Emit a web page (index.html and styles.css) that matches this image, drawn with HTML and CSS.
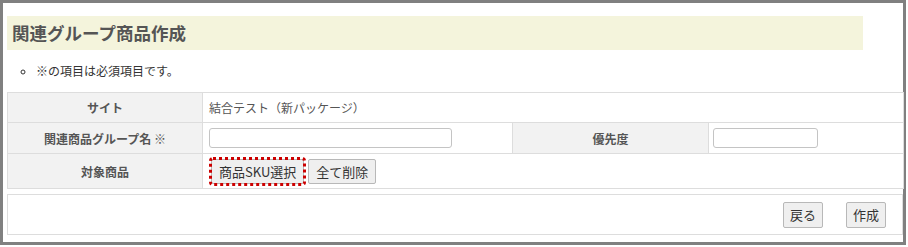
FILE: index.html
```html
<!DOCTYPE html>

<html lang="ja">
    <head>
        <title>関連グループ商品作成</title>

        <link rel="stylesheet" href="styles.css">

    </head>

    <body>
        <div class="frame">
            <h1 class="page-title">関連グループ商品作成</h1>

            <ul class="notice">
                <li>※の項目は必須項目です。</li>
            </ul>

            <table class="form-table">
                <colgroup>
                    <col class="col-label">
                    <col class="col-value">
                    <col class="col-label2">
                    <col class="col-value2">
                </colgroup>
                <tr class="row-site">
                    <th>サイト</th>
                    <td colspan="3">結合テスト（新パッケージ）</td>
                </tr>
                <tr class="row-name">
                    <th>関連商品グループ名 ※</th>
                    <td><input type="text" class="input-name"></td>
                    <th>優先度</th>
                    <td><input type="text" class="input-priority"></td>
                </tr>
                <tr class="row-target">
                    <th>対象商品</th>
                    <td colspan="3">
                        <div class="btn-row">
                            <button class="btn btn-focus">商品SKU選択</button>
                            <button class="btn">全て削除</button>
                        </div>
                    </td>
                </tr>
            </table>

            <div class="footer">
                <button class="btn btn-footer">戻る</button>
                <button class="btn btn-footer">作成</button>
            </div>
        </div>
    </body>
</html>
```

FILE: styles.css
```css
html, body {
    margin: 0;
    background: #ffffff;
    font-family: "Noto Sans CJK JP", "Noto Sans", sans-serif;
    color: #555555;
}

.frame {
    box-sizing: border-box;
    width: 906px;
    height: 245px;
    border: 3px solid #808080;
    padding: 13px 0 0 4px;
}

.page-title {
    box-sizing: border-box;
    width: 856px;
    height: 34px;
    margin: 0;
    padding: 0 5px;
    background: #f4f4dc;
    font-size: 17.5px;
    font-weight: bold;
    line-height: 34px;
    color: #555555;
}

.notice {
    margin: 0;
    padding: 13px 0 13px 29px;
    list-style: circle;
    font-size: 12px;
    line-height: 16px;
    color: #333333;
}

.notice li::marker {
    font-size: 10px;
}

.form-table {
    width: 896px;
    border-collapse: collapse;
    table-layout: fixed;
    font-size: 12px;
}

.col-label { width: 195px; }
.col-value { width: 310px; }
.col-label2 { width: 196px; }
.col-value2 { width: 195px; }

.form-table th,
.form-table td {
    border: 1px solid #dddddd;
    padding: 0 6px;
}

.form-table th {
    background: #f2f2f2;
    font-weight: bold;
    color: #555555;
    text-align: center;
}

.form-table td {
    color: #555555;
}

.row-site th, .row-site td { height: 29px; }
.row-name th, .row-name td { height: 30px; }
.row-target th, .row-target td { height: 34px; }

.form-table td:last-child { padding-left: 4px; }
.row-site td, .row-target td { padding-left: 6px !important; }

.form-table input {
    box-sizing: border-box;
    height: 20px;
    border: 1px solid #c4c4c4;
    border-radius: 3px;
    padding: 0 4px;
    display: block;
}

.input-name { width: 243px; }
.input-priority { width: 105px; }

.btn-row {
    display: flex;
    gap: 4px;
    padding-left: 2px;
}

.btn {
    box-sizing: border-box;
    height: 25px;
    padding: 0 7px;
    border: 1px solid #b8b8b8;
    border-radius: 2px;
    background: #efefef;
    font-family: "Noto Sans CJK JP", "Noto Sans", sans-serif;
    font-size: 13px;
    color: #333333;
}

.btn-focus {
    outline: 3px dotted #cc0000;
    outline-offset: -1px;
}

.footer {
    box-sizing: border-box;
    width: 896px;
    height: 41px;
    margin-top: 5px;
    border: 1px solid #dddddd;
    display: flex;
    justify-content: flex-end;
    align-items: center;
    gap: 23px;
    padding-right: 16px;
}

.btn-footer {
    height: 26px;
    padding: 0 6px;
}
```
